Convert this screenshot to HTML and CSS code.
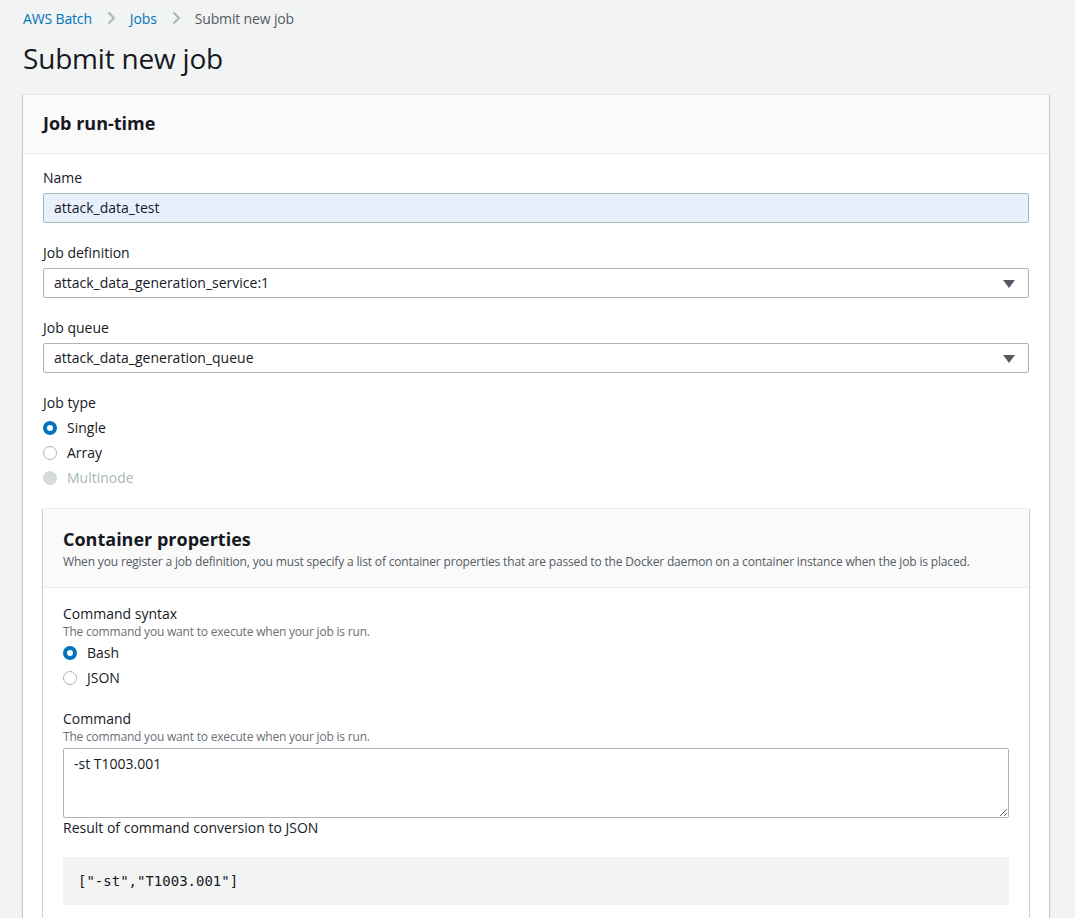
FILE: index.html
```html
<!DOCTYPE html>
<html lang="en">
<head>
<meta charset="utf-8">
<title>Submit new job</title>
<link rel="stylesheet" href="styles.css">
</head>
<body>
<div class="page">
  <nav class="crumbs">
    <a class="crumb-link">AWS Batch</a>
    <svg class="chev" width="16" height="16" viewBox="0 0 16 16"><path d="M5.5 2.5 L11 8 L5.5 13.5" fill="none" stroke="#aab7b8" stroke-width="2"/></svg>
    <a class="crumb-link">Jobs</a>
    <svg class="chev" width="16" height="16" viewBox="0 0 16 16"><path d="M5.5 2.5 L11 8 L5.5 13.5" fill="none" stroke="#aab7b8" stroke-width="2"/></svg>
    <span class="crumb-current">Submit new job</span>
  </nav>
  <h1 class="title">Submit new job</h1>

  <section class="card">
    <header class="card-head">
      <h2 class="card-title">Job run-time</h2>
    </header>
    <div class="card-body">
      <div class="field">
        <label class="label">Name</label>
        <div class="input filled">attack_data_test</div>
      </div>
      <div class="field">
        <label class="label">Job definition</label>
        <div class="input select">attack_data_generation_service:1<span class="caret"></span></div>
      </div>
      <div class="field">
        <label class="label">Job queue</label>
        <div class="input select">attack_data_generation_queue<span class="caret"></span></div>
      </div>
      <div class="field">
        <label class="label">Job type</label>
        <div class="radios">
          <div class="radio"><span class="dot checked"></span>Single</div>
          <div class="radio"><span class="dot"></span>Array</div>
          <div class="radio disabled"><span class="dot off"></span>Multinode</div>
        </div>
      </div>

      <section class="card inner">
        <header class="card-head inner-head">
          <h2 class="card-title">Container properties</h2>
          <p class="card-desc">When you register a job definition, you must specify a list of container properties that are passed to the Docker daemon on a container instance when the job is placed.</p>
        </header>
        <div class="card-body inner-body">
          <div class="field">
            <label class="label">Command syntax</label>
            <div class="hint">The command you want to execute when your job is run.</div>
            <div class="radios">
              <div class="radio"><span class="dot checked"></span>Bash</div>
              <div class="radio"><span class="dot"></span>JSON</div>
            </div>
          </div>
          <div class="field">
            <label class="label">Command</label>
            <div class="hint">The command you want to execute when your job is run.</div>
            <textarea class="textarea">-st T1003.001</textarea>
            <div class="result-label">Result of command conversion to JSON</div>
            <pre class="code">["-st","T1003.001"]</pre>
          </div>
        </div>
      </section>
    </div>
  </section>
</div>
</body>
</html>
```

FILE: styles.css
```css
* { box-sizing: border-box; }
html, body { margin: 0; padding: 0; }
body {
  background: #f2f3f3;
  font-family: "Open Sans", "Noto Sans", sans-serif;
  color: #16191f;
  font-size: 14px;
  height: 918px;
  overflow: hidden;
}
.page { padding: 6px 26px 0 23px; }
.crumbs {
  display: flex;
  align-items: center;
  gap: 11px;
  height: 24px;
  font-size: 14px;
  letter-spacing: -0.15px;
}
.crumb-link { color: #0073bb; }
.crumb-current { color: #545b64; }
.chev { display: block; }
.title {
  margin: 10px 0 0;
  font-size: 28px;
  font-weight: 400;
  line-height: 36px;
  height: 54px;
  letter-spacing: -0.2px;
}
.card {
  background: #fff;
  border-top: 1px solid #eaeded;
  box-shadow: 0 1px 1px 0 rgba(0,28,36,.3), 1px 1px 1px 0 rgba(0,28,36,.15), -1px 1px 1px 0 rgba(0,28,36,.15);
}
.card-head {
  background: #fafafa;
  border-bottom: 1px solid #eaeded;
  padding: 16px 20px 18px;
}
.card-title {
  margin: 0;
  font-size: 18px;
  font-weight: 700;
  line-height: 24px;
}
.card-body { padding: 13px 20px 20px; }
.field { margin-bottom: 19px; }
.label {
  display: block;
  font-size: 14px;
  line-height: 22px;
  margin-bottom: 4px;
}
.input {
  position: relative;
  height: 30px;
  border: 1px solid #aab7b8;
  border-radius: 2px;
  padding: 0 10px;
  line-height: 28px;
  font-size: 14px;
  color: #16191f;
}
.filled { background: #e8f0fe; }
.select { padding-right: 36px; }
.caret {
  position: absolute;
  right: 13px;
  top: 11px;
  width: 0; height: 0;
  border-left: 6px solid transparent;
  border-right: 6px solid transparent;
  border-top: 8px solid #545b64;
}
.radios { display: flex; flex-direction: column; }
.label + .radios { margin-top: -3px; }
.radio {
  display: flex;
  align-items: center;
  height: 25px;
  font-size: 14px;
}
.radio.disabled { color: #aab7b8; }
.dot {
  width: 14px; height: 14px;
  border-radius: 50%;
  border: 1px solid #aab7b8;
  margin-right: 10px;
  background: #fff;
}
.dot.checked { border: 4px solid #0073bb; }
.dot.off { background: #d5dbdb; border-color: #d5dbdb; }
.inner {
  margin-top: -1px;
  border-top: 1px solid #eaeded;
}
.inner-head { padding: 18px 20px 17px; }
.card-desc {
  margin: 3px 0 0;
  font-size: 12px;
  line-height: 16px;
  color: #545b64;
  letter-spacing: -0.16px;
}
.inner-body { padding: 15px 20px 20px; }
.inner-body .field { margin-bottom: 18px; }
.hint {
  font-size: 12px;
  line-height: 16px;
  color: #687078;
  margin-top: -5px;
  margin-bottom: 0;
  letter-spacing: -0.2px;
}
.textarea {
  display: block;
  width: 100%;
  height: 70px;
  margin-top: 3px;
  border: 1px solid #aab7b8;
  border-radius: 2px;
  padding: 4px 10px;
  font-family: "Open Sans", "Noto Sans", sans-serif;
  font-size: 14px;
  line-height: 22px;
  color: #16191f;
  resize: vertical;
}
.result-label {
  font-size: 14px;
  line-height: 22px;
  margin-top: -1px;
}
.code {
  margin: 18px 0 0;
  background: #f2f3f3;
  height: 48px;
  padding: 0 15px;
  line-height: 48px;
  font-family: "DejaVu Sans Mono", monospace;
  font-size: 14px;
  color: #16191f;
}
```
